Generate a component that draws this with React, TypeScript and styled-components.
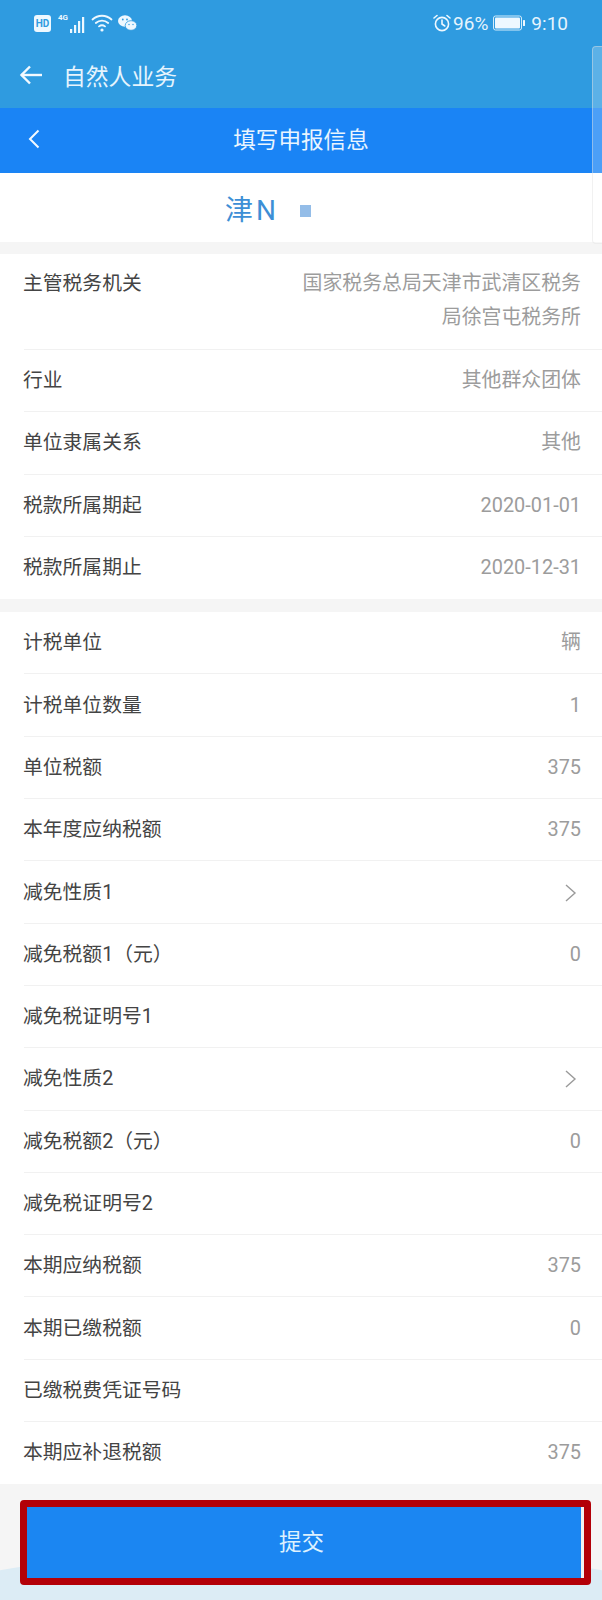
import React from "react";
import styled, { createGlobalStyle } from "styled-components";

const GlobalStyle = createGlobalStyle`
    html, body {
        margin: 0;
        padding: 0;
        background: #f5f5f5;
    }
    * {
        box-sizing: border-box;
    }
`;

const Page = styled.div`
    position: relative;
    width: 602px;
    height: 1600px;
    overflow: hidden;
    font-family: Roboto, "Noto Sans CJK SC", sans-serif;
    background: #f5f5f5;
`;

const AppHeader = styled.header`
    height: 108px;
    padding: 0 34px 0 34px;
    background: #2f9be0;
    color: #e6f4fd;
`;

const StatusBar = styled.div`
    height: 46px;
    display: flex;
    align-items: center;
    justify-content: space-between;
`;

const StatusGroup = styled.div`
    display: flex;
    align-items: center;
    gap: 5px;
`;

const StatusText = styled.span`
    font-size: 19px;
    line-height: 1;
`;

const HdBadge = styled.span`
    width: 17px;
    height: 17px;
    border-radius: 3px;
    background: #eef8ff;
    color: #2f9be0;
    font-size: 10px;
    font-weight: 700;
    line-height: 17px;
    text-align: center;
`;

const AlarmSvg = styled.svg`
    margin-right: -3px;
`;

const AppTitleRow = styled.div`
    height: 58px;
    margin-left: -15px;
    display: flex;
    align-items: center;
    gap: 20px;
    font-size: 22.800px;
`;

const NavBar = styled.div`
    height: 65px;
    padding: 0 28px 4px 28px;
    display: grid;
    grid-template-columns: 40px 1fr 40px;
    align-items: center;
    background: #1a84f5;
    color: #e9f5ff;
`;

const NavTitle = styled.h1`
    margin: 0;
    font-size: 22.600px;
    font-weight: 400;
    text-align: center;
`;

const PlateBar = styled.div`
    height: 69px;
    padding-left: 225px;
    display: flex;
    align-items: center;
    gap: 21px;
    background: #fff;
    color: #3d8fd6;
    font-size: 28px;
    letter-spacing: 3px;
`;

const PlateMask = styled.span`
    width: 11px;
    height: 12px;
    margin-top: 6px;
    background: #94bde8;
    filter: blur(0.5px);
`;

const Section = styled.section<{ $gap: number }>`
    margin-top: ${(p) => p.$gap}px;
    background: #fff;
`;

const Row = styled.div<{ $tall?: boolean }>`
    position: relative;
    height: ${(p) => (p.$tall ? "96px" : "62.300px")};
    padding: ${(p) => (p.$tall ? "13px" : "0")} 21px 0 23px;
    display: flex;
    justify-content: space-between;
    align-items: ${(p) => (p.$tall ? "flex-start" : "center")};
    &:not(:last-child)::after {
        content: "";
        position: absolute;
        left: 24px;
        right: 0;
        bottom: 0;
        height: 1px;
        background: #f1f1f1;
    }
`;

const Label = styled.span`
    flex-shrink: 0;
    font-size: 19.800px;
    line-height: 34px;
    color: #444;
`;

const Value = styled.span`
    max-width: 296px;
    font-size: 19.900px;
    line-height: 34px;
    text-align: right;
    color: #9c9c9c;
`;

const Footer = styled.div`
    position: relative;
    height: 120px;
    padding: 16px 11px 0 20px;
    overflow: hidden;
`;

const FooterWave = styled.div`
    position: absolute;
    left: -400px;
    right: -400px;
    top: 62px;
    height: 500px;
    border-radius: 50%;
    background: #dcecf5;
`;

const SubmitFrame = styled.div`
    position: relative;
    height: 85px;
    border: 7px solid #b30008;
    border-radius: 4px;
    background: #f2f2f2;
`;

const SubmitButton = styled.button`
    display: block;
    width: 554px;
    height: 71px;
    padding: 0 5px 5px 0;
    border: 0;
    background: #1b86f2;
    color: #def1fe;
    font-family: inherit;
    font-size: 22.500px;
`;

const ScrollThumb = styled.div`
    position: absolute;
    top: 46px;
    right: 0;
    width: 10px;
    height: 198px;
    border: 1px solid rgba(225, 225, 225, 0.45);
    border-right: 0;
    border-radius: 4px 0 0 4px;
    background: rgba(255, 255, 255, 0.22);
`;

const ChevronSlot = styled.span`
    display: flex;
    margin-right: 4px;
`;

const taxRows: { label: string; value?: string; arrow?: boolean }[] = [
    { label: "计税单位", value: "辆" },
    { label: "计税单位数量", value: "1" },
    { label: "单位税额", value: "375" },
    { label: "本年度应纳税额", value: "375" },
    { label: "减免性质1", arrow: true },
    { label: "减免税额1（元）", value: "0" },
    { label: "减免税证明号1" },
    { label: "减免性质2", arrow: true },
    { label: "减免税额2（元）", value: "0" },
    { label: "减免税证明号2" },
    { label: "本期应纳税额", value: "375" },
    { label: "本期已缴税额", value: "0" },
    { label: "已缴税费凭证号码" },
    { label: "本期应补退税额", value: "375" },
];

const periodRows = [
    { label: "行业", value: "其他群众团体" },
    { label: "单位隶属关系", value: "其他" },
    { label: "税款所属期起", value: "2020-01-01" },
    { label: "税款所属期止", value: "2020-12-31" },
];

const SignalIcon: React.FC = () => (
    <svg width="30" height="22" viewBox="0 0 30 22" fill="#eef8ff">
        <text x="2" y="8" fontSize="8" fontWeight="700" fontFamily="Roboto, sans-serif">4G</text>
        <rect x="14" y="17" width="2.200" height="4" />
        <rect x="18" y="13" width="2.200" height="8" />
        <rect x="22" y="9" width="2.200" height="12" />
        <rect x="26" y="5" width="2.200" height="16" />
    </svg>
);

const WifiIcon: React.FC = () => (
    <svg width="22" height="20" viewBox="0 0 22 20" fill="none" stroke="#eef8ff" strokeWidth="1.800" strokeLinecap="round">
        <path d="M1.500 6.500c5.300-5 13.700-5 19 0" />
        <path d="M4.800 10c3.600-3.200 8.800-3.200 12.400 0" />
        <path d="M8 13.400c1.800-1.400 4.200-1.400 6 0" />
        <circle cx="11" cy="17" r="1.600" fill="#eef8ff" stroke="none" />
    </svg>
);

const WechatIcon: React.FC = () => (
    <svg width="19" height="17" viewBox="0 0 19 17" fill="#eef8ff">
        <ellipse cx="7" cy="6" rx="7" ry="5.800" />
        <ellipse cx="13" cy="10.500" rx="5.800" ry="4.800" stroke="#2f9be0" strokeWidth="0.800" />
        <circle cx="4.800" cy="4.500" r="0.900" fill="#2f9be0" />
        <circle cx="9" cy="4.500" r="0.900" fill="#2f9be0" />
        <circle cx="11" cy="9.500" r="0.700" fill="#2f9be0" />
        <circle cx="15" cy="9.500" r="0.700" fill="#2f9be0" />
    </svg>
);

const AlarmIcon: React.FC = () => (
    <AlarmSvg width="18" height="18" viewBox="0 0 18 18" fill="none" stroke="#eef8ff" strokeWidth="1.600" strokeLinecap="round">
        <circle cx="9" cy="10" r="6.600" />
        <path d="M9 6v4l2.800 2" />
        <path d="M1 4l3-2.500M17 4l-3-2.500" />
    </AlarmSvg>
);

const BatteryIcon: React.FC = () => (
    <svg width="33" height="16" viewBox="0 0 33 16">
        <rect x="0.500" y="1" width="28" height="14" rx="2" fill="none" stroke="#d4ecfa" strokeWidth="1" />
        <rect x="2" y="2.500" width="25" height="11" rx="1" fill="#eef8ff" />
        <rect x="30" y="5" width="2" height="6" rx="0.500" fill="#eef8ff" />
    </svg>
);

const BackArrow: React.FC = () => (
    <svg width="24" height="20" viewBox="0 0 24 20" fill="none" stroke="#f2f9ff" strokeWidth="2.400">
        <path d="M23 10H2" />
        <path d="M11 1.500L2.500 10l8.500 8.500" />
    </svg>
);

const NavChevron: React.FC = () => (
    <svg width="12" height="20" viewBox="0 0 12 20" fill="none" stroke="#f2f9ff" strokeWidth="2">
        <path d="M10.500 1.500L2 10l8.500 8.500" />
    </svg>
);

const RowChevron: React.FC = () => (
    <ChevronSlot>
        <svg width="13" height="20" viewBox="0 0 13 20" fill="none" stroke="#9a9a9a" strokeWidth="1.400">
            <path d="M2 2l9 8-9 8" />
        </svg>
    </ChevronSlot>
);

const App: React.FC = () => {
    return (
        <Page>
            <GlobalStyle />
            <AppHeader>
                <StatusBar>
                    <StatusGroup>
                        <HdBadge>HD</HdBadge>
                        <SignalIcon />
                        <WifiIcon />
                        <WechatIcon />
                    </StatusGroup>
                    <StatusGroup>
                        <AlarmIcon />
                        <StatusText>96%</StatusText>
                        <BatteryIcon />
                        <StatusText>9:10</StatusText>
                    </StatusGroup>
                </StatusBar>
                <AppTitleRow>
                    <BackArrow />
                    <span>自然人业务</span>
                </AppTitleRow>
            </AppHeader>
            <NavBar>
                <NavChevron />
                <NavTitle>填写申报信息</NavTitle>
            </NavBar>
            <PlateBar>
                <span>津N</span>
                <PlateMask />
            </PlateBar>
            <Section $gap={12}>
                <Row $tall>
                    <Label>主管税务机关</Label>
                    <Value>国家税务总局天津市武清区税务局徐宫屯税务所</Value>
                </Row>
                {periodRows.map((row) => (
                    <Row key={row.label}>
                        <Label>{row.label}</Label>
                        <Value>{row.value}</Value>
                    </Row>
                ))}
            </Section>
            <Section $gap={13}>
                {taxRows.map((row) => (
                    <Row key={row.label}>
                        <Label>{row.label}</Label>
                        {row.arrow ? <RowChevron /> : <Value>{row.value}</Value>}
                    </Row>
                ))}
            </Section>
            <Footer>
                <FooterWave />
                <SubmitFrame>
                    <SubmitButton>提交</SubmitButton>
                </SubmitFrame>
            </Footer>
            <ScrollThumb />
        </Page>
    );
};

export default App;
